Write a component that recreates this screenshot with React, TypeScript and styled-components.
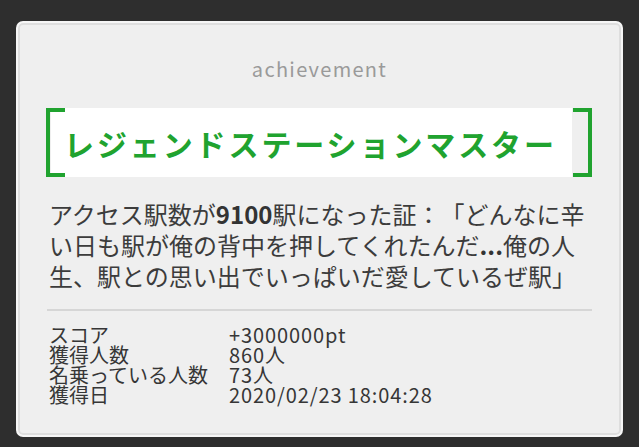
import React from 'react';
import styled, { createGlobalStyle } from 'styled-components';

const GlobalStyle = createGlobalStyle`
  html, body {
    margin: 0;
    padding: 0;
    background: #2e2e2e;
  }
  body {
    font-family: 'Noto Sans CJK JP', 'Noto Sans', sans-serif;
    text-spacing-trim: space-all;
  }
`;

const Page = styled.div`
  width: 639px;
  height: 447px;
  padding: 21px 16px 0;
  box-sizing: border-box;
  background: #2e2e2e;
`;

const Card = styled.section`
  width: 607px;
  height: 416px;
  box-sizing: border-box;
  background: #efefef;
  border: 2px solid #f6f6f6;
  border-radius: 7px;
  box-shadow: inset 0 0 0 2px #dedede;
  padding: 34px 29px 0 29px;
  display: flex;
  flex-direction: column;
`;

const Kind = styled.div`
  text-align: center;
  color: #9a9a9a;
  font-size: 20px;
  line-height: 24px;
  letter-spacing: 1.3px;
`;

const TitleWrap = styled.div`
  position: relative;
  margin-top: 27px;
  height: 69px;
  padding: 0 20px 0 4px;
`;

const TitleBox = styled.div`
  height: 100%;
  background: #ffffff;
  display: flex;
  align-items: center;
  padding-left: 13px;
`;

const Title = styled.h2`
  margin: 0;
  color: #20a32f;
  font-size: 30px;
  font-weight: 700;
  letter-spacing: 2.9px;
  white-space: nowrap;
`;

const Bracket = styled.span<{ $side: 'left' | 'right' }>`
  position: absolute;
  top: 0;
  bottom: 0;
  width: 19px;
  box-sizing: border-box;
  border: 4px solid #20a32f;
  ${(p) => (p.$side === 'left' ? 'left: -1px; border-right: none;' : 'right: 0; border-left: none;')}
`;

const Description = styled.p`
  margin: 21px 0 0;
  color: #3c3c3c;
  font-size: 24px;
  line-height: 31px;
  padding-left: 2px;
  text-spacing-trim: space-all;
  font-feature-settings: normal;
`;

const Strong = styled.b`
  font-weight: 700;
  color: #333;
`;

const Divider = styled.hr`
  margin: 18px 0 0;
  border: none;
  height: 2px;
  background: #d6d6d6;
`;

const Stats = styled.dl`
  margin: 14px 0 0;
  padding-left: 2px;
  display: grid;
  grid-template-columns: 180px 1fr;
  font-size: 20px;
  line-height: 20px;
  color: #363636;
`;

const Label = styled.dt`
  margin: 0;
  white-space: nowrap;
`;

const Value = styled.dd`
  margin: 0;
  white-space: nowrap;
  letter-spacing: 0.9px;
`;

const stats = [
  { label: 'スコア', value: '+3000000pt' },
  { label: '獲得人数', value: '860人' },
  { label: '名乗っている人数', value: '73人' },
  { label: '獲得日', value: '2020/02/23 18:04:28' },
];

export default function App() {
  return (
    <Page>
      <GlobalStyle />
      <Card>
        <Kind>achievement</Kind>
        <TitleWrap>
          <Bracket $side="left" />
          <TitleBox>
            <Title>レジェンドステーションマスター</Title>
          </TitleBox>
          <Bracket $side="right" />
        </TitleWrap>
        <Description>
          アクセス駅数が<Strong>9100</Strong>駅になった証：「どんなに辛い日も駅が俺の背中を押してくれたんだ
          <Strong>...</Strong>俺の人生、駅との思い出でいっぱいだ愛しているぜ駅」
        </Description>
        <Divider />
        <Stats>
          {stats.map((s) => (
            <React.Fragment key={s.label}>
              <Label>{s.label}</Label>
              <Value>{s.value}</Value>
            </React.Fragment>
          ))}
        </Stats>
      </Card>
    </Page>
  );
}
